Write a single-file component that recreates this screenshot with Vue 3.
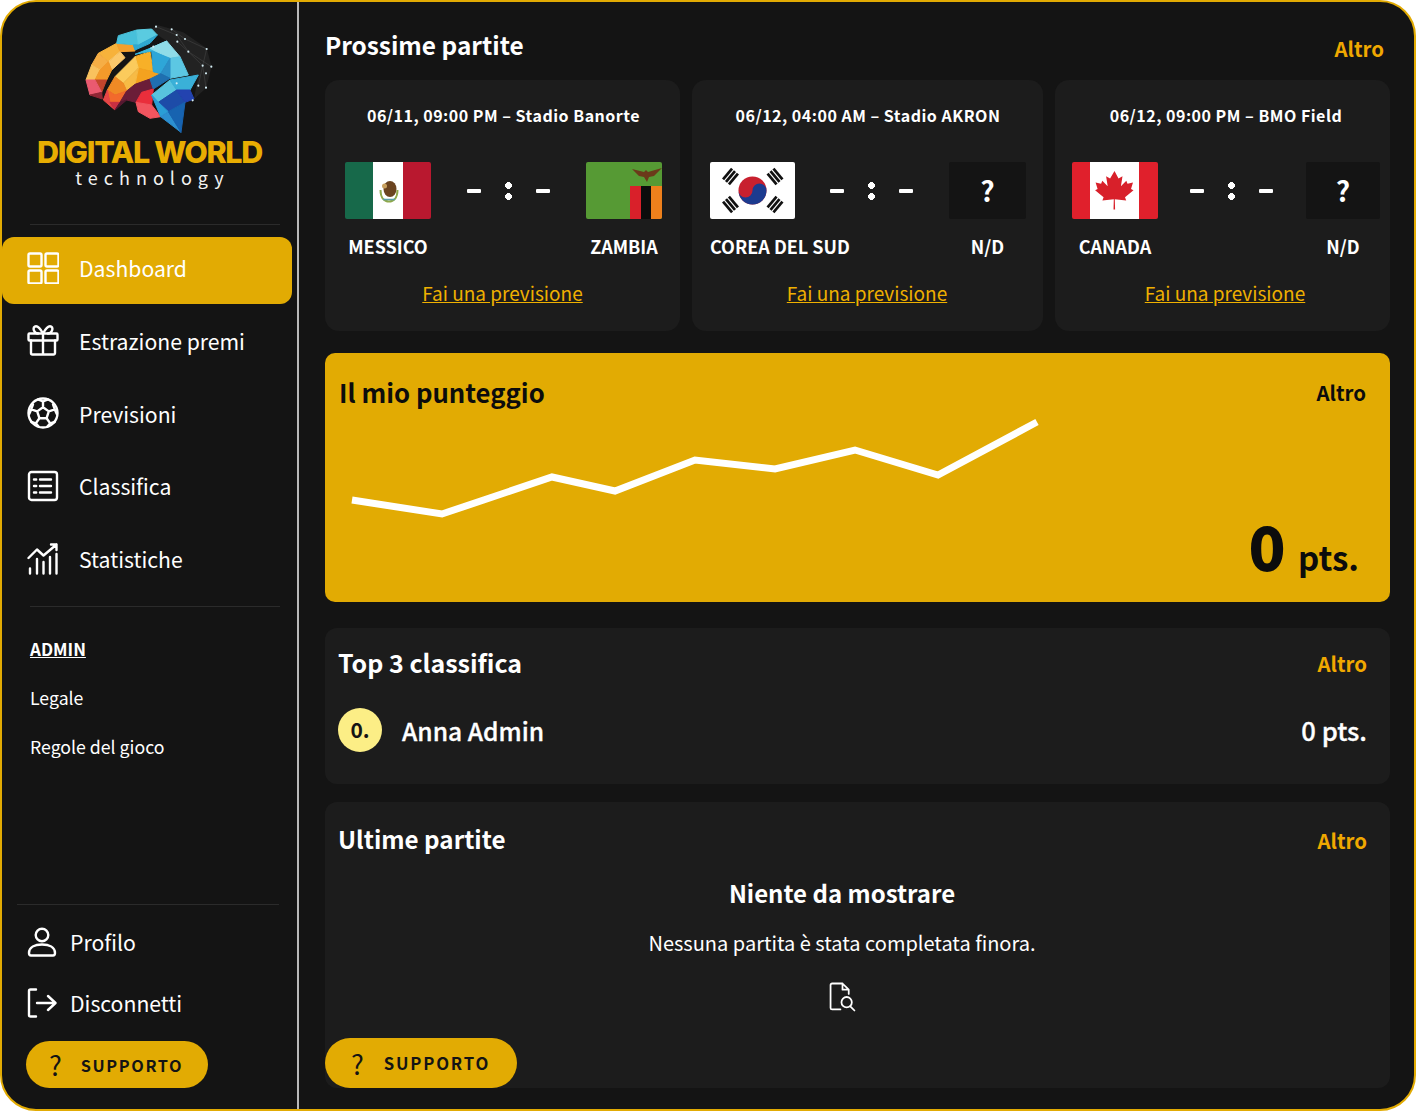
<script setup>
const navItems = [
  { label: 'Dashboard', icon: 'grid', active: true },
  { label: 'Estrazione premi', icon: 'gift' },
  { label: 'Previsioni', icon: 'ball' },
  { label: 'Classifica', icon: 'list' },
  { label: 'Statistiche', icon: 'stats' }
]

const matches = [
  { when: '06/11, 09:00 PM – Stadio Banorte', home: { name: 'MESSICO', flag: 'mx', width: 86 }, away: { name: 'ZAMBIA', flag: 'zm', width: 76 } },
  { when: '06/12, 04:00 AM – Stadio AKRON', home: { name: 'COREA DEL SUD', flag: 'kr', width: 85 }, away: { name: 'N/D', width: 77 } },
  { when: '06/12, 09:00 PM – BMO Field', home: { name: 'CANADA', flag: 'ca', width: 86 }, away: { name: 'N/D', width: 74 } }
]

// points of the score line, in the chart's own coordinates
const chartPoints = '13,85 103,99 213,62 276,76 356,45 436,54 516,35 599,60 698,7'

// low poly logo: [colour, points]
const brainFacets = [
  ['#f7b23b', '85,115 140,85 150,110 115,140'],
  ['#f5a02c', '140,85 190,90 195,108 150,110'],
  ['#fbc86b', '115,140 150,110 165,128 125,165'],
  ['#f6ae45', '85,115 115,140 90,165 65,150'],
  ['#f9c25e', '65,150 90,165 75,195 48,195'],
  ['#f39a2a', '90,165 115,140 125,165 110,195 75,195'],
  ['#c2452c', '75,195 110,195 95,232'],
  ['#ea5a70', '48,195 75,195 95,232 60,240'],
  ['#8f2735', '60,240 95,232 97,252'],
  ['#47c0da', '140,85 145,62 200,45 205,90'],
  ['#5acbe0', '200,45 245,42 262,60 205,90'],
  ['#2fa8d0', '190,90 205,90 262,60 240,85 195,105'],
  ['#f7b028', '195,125 240,110 250,170 205,160'],
  ['#fbcb5c', '135,185 195,125 205,160 160,205'],
  ['#f4a21f', '205,160 250,170 270,178 240,192 195,208'],
  ['#f7bb45', '160,205 205,160 195,208 170,228'],
  ['#ef8a25', '135,185 160,205 170,228 135,240 112,225'],
  ['#f26a2c', '112,225 135,240 170,228 150,262 120,262'],
  ['#e64646', '100,255 112,225 120,262 135,285'],
  ['#c92f42', '120,262 150,262 135,285'],
  ['#6b1d38', '150,262 170,228 195,208 240,192 250,222 215,232 198,262 170,255'],
  ['#541830', '135,285 150,262 170,255 150,272'],
  ['#3bb9dd', '195,118 240,100 290,78 300,130 245,108'],
  ['#8fdce8', '240,100 290,78 330,125 300,130'],
  ['#2ea6d8', '245,108 300,130 272,176 250,170'],
  ['#5cc7e3', '300,130 330,125 355,180 300,190'],
  ['#2b8fc7', '272,176 300,130 300,190'],
  ['#1f6fb0', '272,176 300,190 250,222 240,192'],
  ['#ea2e3b', '198,262 215,232 250,222 245,270'],
  ['#f2555f', '198,262 245,270 272,305 240,310 205,290'],
  ['#58c4de', '245,240 300,195 320,225 265,262'],
  ['#3ab0d8', '300,195 385,180 360,225 320,225'],
  ['#1d4ca8', '265,262 320,225 345,262 295,290'],
  ['#2343b0', '320,225 360,225 372,252 345,262'],
  ['#2a9ed6', '245,240 265,262 295,290 272,305'],
  ['#2c8fd0', '272,305 295,290 333,352'],
  ['#1763b0', '295,290 345,262 333,352']
]

const brainDots = [
  [258, 35], [305, 43], [320, 60], [345, 72], [322, 80], [410, 102], [355, 110],
  [398, 152], [424, 155], [408, 175], [385, 212], [408, 218], [368, 256], [320, 205], [250, 95]
]

// taegeuk bars on the Korean flag
const trigrams = [
  { x: 20.5, y: 14.5, r: -50 },
  { x: 65, y: 14.5, r: 50 },
  { x: 20.5, y: 42.5, r: 50 },
  { x: 65, y: 42.5, r: -50 }
]
</script>

<template>
  <div class="frame">
    <aside class="sidebar">
      <div class="logo">
        <svg class="brain" viewBox="0 0 480 375">
          <polygon points="240,45 262,30 340,52 410,100 425,155 408,220 372,252 385,180 355,180 330,120 290,78" fill="#222" />
          <path d="M258 35 320 60 355 110 398 152 408 218M305 43 345 72 410 102 398 152 385 212M322 80 355 110 424 155" fill="none" stroke="#4a4a4a" stroke-width="1.500" />
          <polygon v-for="(f, i) in brainFacets" :key="i" :points="f[1]" :fill="f[0]" :stroke="f[0]" stroke-width="3" stroke-linejoin="round" />
          <circle v-for="(d, i) in brainDots" :key="'d' + i" :cx="d[0]" :cy="d[1]" r="3.200" fill="#d5eef5" />
        </svg>
        <div class="brand">DIGITAL WORLD</div>
        <div class="tagline">technology</div>
      </div>

      <hr class="rule" />

      <nav class="nav">
        <a v-for="item in navItems" :key="item.label" class="nav-item" :class="{ active: item.active }">
          <svg class="icon" viewBox="0 0 32 32">
            <g v-if="item.icon === 'grid'">
              <rect x="1.500" y="1.500" width="13" height="13" rx="1.500" />
              <rect x="18.500" y="1.500" width="13" height="13" rx="1.500" />
              <rect x="1.500" y="18.500" width="13" height="13" rx="1.500" />
              <rect x="18.500" y="18.500" width="13" height="13" rx="1.500" />
            </g>
            <g v-else-if="item.icon === 'gift'">
              <rect x="1.500" y="9.500" width="29" height="7" rx="1" />
              <path d="M4 16.500V29a1.500 1.500 0 0 0 1.500 1.500h21A1.500 1.500 0 0 0 28 29V16.500M16 9.500v21" />
              <path d="M16 9.500C13 4 10 1.500 7.800 2.600 5.400 4 7 9.500 11 9.500M16 9.500C19 4 22 1.500 24.200 2.600 26.600 4 25 9.500 21 9.500" />
            </g>
            <g v-else-if="item.icon === 'ball'">
              <circle cx="16" cy="16" r="14.500" />
              <path d="M16 10.200l5.800 4.200-2.200 6.800h-7.200l-2.200-6.800zM16 10.200V4.500L11 2.400M16 4.500l5-2.100M21.800 14.400l6-2 2 4.500M27.800 12.400l-1.800-5M10.200 14.400l-6-2-2 4.500M4.200 12.400 6 7.400M19.600 21.200l3.600 5.200-3 3.300M23.200 26.400l4.400-1.400M12.400 21.200l-3.600 5.200 3 3.300M8.800 26.400 4.400 25" />
            </g>
            <g v-else-if="item.icon === 'list'">
              <rect x="2" y="2" width="28" height="28" rx="2.500" />
              <path d="M13 9.500h11M13 16h11M13 22.500h11M7 9.500h2.200M7 16h2.200M7 22.500h2.200" />
            </g>
            <g v-else>
              <path d="M1.500 15 10 6.500l6.500 6L29.500 1.500M24 1.500h5.500V7" />
              <path d="M3 30.500v-5M10 30.500V16M16.500 30.500V19M23 30.500V14M29.500 30.500V11" />
            </g>
          </svg>
          <span>{{ item.label }}</span>
        </a>
      </nav>

      <hr class="rule rule-mid" />

      <div class="admin">
        <a class="admin-title">ADMIN</a>
        <a>Legale</a>
        <a>Regole del gioco</a>
      </div>

      <div class="side-bottom">
        <hr class="rule rule-low" />
        <a class="account">
          <svg class="icon-small" viewBox="0 0 30 30">
            <circle cx="15" cy="8" r="6.300" />
            <path d="M2 26c0-6 6-8.500 13-8.500S28 20 28 26c0 1.500-.8 2.500-2 2.500H4c-1.200 0-2-1-2-2.500z" />
          </svg>
          <span>Profilo</span>
        </a>
        <a class="account">
          <svg class="icon-small" viewBox="0 0 30 30">
            <path d="M9 1.500H3.500A1.500 1.500 0 0 0 2 3v24a1.500 1.500 0 0 0 1.500 1.500H9M10 15h18M21 8l7.500 7-7.500 7" />
          </svg>
          <span>Disconnetti</span>
        </a>
        <button class="support side-support"><span class="qm">?</span>SUPPORTO</button>
      </div>
    </aside>

    <main class="main">
      <section class="upcoming">
        <div class="head">
          <h2>Prossime partite</h2>
          <a class="more">Altro</a>
        </div>
        <div class="matches">
          <article v-for="m in matches" :key="m.when" class="match">
            <p class="when">{{ m.when }}</p>
            <div class="teams">
              <div v-for="(team, side) in [m.home, null, m.away]" :key="side" :class="team ? 'team' : 'score'" :style="team ? { width: team.width + 'px' } : null">
                <template v-if="team">
                  <svg v-if="team.flag === 'mx'" class="flag" viewBox="0 0 86 57">
                    <rect width="29" height="57" fill="#17694a" />
                    <rect x="28" width="31" height="57" fill="#fff" />
                    <rect x="58" width="28" height="57" fill="#b9182f" />
                    <path d="M35.500 28c0 8 4 11.500 8.500 11.500s8.500-3.500 8.500-11.500" fill="none" stroke="#8fa84a" stroke-width="2" />
                    <ellipse cx="45" cy="27" rx="6.500" ry="8" fill="#6b4420" />
                    <circle cx="39.500" cy="24" r="2.500" fill="#c9a15f" />
                    <path d="M38 37.500h12" stroke="#5aa0a8" stroke-width="1.500" />
                  </svg>
                  <svg v-else-if="team.flag === 'zm'" class="flag" viewBox="0 0 76 57">
                    <rect width="76" height="57" fill="#569a34" />
                    <rect x="44" y="24" width="11" height="33" fill="#d9202a" />
                    <rect x="55" y="24" width="10" height="33" fill="#0c0c0c" />
                    <rect x="65" y="24" width="11" height="33" fill="#ee801c" />
                    <path d="M46 7l12 3 2-2 2 2 14-4-8 8-5 1-2 5-3-5-5-1z" fill="#6b3a1a" />
                  </svg>
                  <svg v-else-if="team.flag === 'kr'" class="flag" viewBox="0 0 85 57">
                    <rect width="85" height="57" fill="#fff" />
                    <circle cx="42.500" cy="28.500" r="14" fill="#c8202f" />
                    <path d="M28.500 28.500a7 7 0 0 0 14 0 7 7 0 0 1 14 0 14 14 0 0 1-28 0z" fill="#1c3b8f" />
                    <g v-for="t in trigrams" :key="t.x + '-' + t.y" :transform="`translate(${t.x} ${t.y}) rotate(${t.r})`" fill="#111">
                      <rect x="-7" y="-5.200" width="14" height="2.700" />
                      <rect x="-7" y="-1.350" width="14" height="2.700" />
                      <rect x="-7" y="2.500" width="14" height="2.700" />
                    </g>
                  </svg>
                  <svg v-else-if="team.flag === 'ca'" class="flag" viewBox="0 0 86 57">
                    <rect width="86" height="57" fill="#e0202c" />
                    <rect x="18" width="49" height="57" fill="#fff" />
                    <path d="M42.500 9l4 7.500 4-2.200-1.600 10 5.400-5.600 1.200 3 5.500-1.300-2 6.600 2.500 1.200-8.500 7 1.200 3.300-11.400-1.200.3 10.200h-1.600l.3-10.200-11.400 1.200 1.200-3.300-8.500-7 2.500-1.200-2-6.600 5.500 1.300 1.200-3 5.400 5.600-1.600-10 4 2.200z" fill="#d8202a" />
                  </svg>
                  <div v-else class="flag unknown">?</div>
                  <div class="team-name">{{ team.name }}</div>
                </template>
                <template v-else>
                  <i class="dash"></i><i class="colon"></i><i class="dash"></i>
                </template>
              </div>
            </div>
            <a class="predict">Fai una previsione</a>
          </article>
        </div>
      </section>

      <section class="score-card">
        <div class="head">
          <h2>Il mio punteggio</h2>
          <a class="more">Altro</a>
        </div>
        <svg class="chart" viewBox="0 0 720 110">
          <polyline :points="chartPoints" fill="none" stroke="#fff" stroke-width="7" />
        </svg>
        <div class="points"><b>0</b> pts.</div>
      </section>

      <section class="panel top-three">
        <div class="head">
          <h2>Top 3 classifica</h2>
          <a class="more">Altro</a>
        </div>
        <div class="rank-row">
          <span class="rank">0.</span>
          <span class="player">Anna Admin</span>
          <span class="player-pts">0 pts.</span>
        </div>
      </section>

      <section class="panel latest">
        <div class="head">
          <h2>Ultime partite</h2>
          <a class="more">Altro</a>
        </div>
        <div class="empty">
          <h3>Niente da mostrare</h3>
          <p>Nessuna partita è stata completata finora.</p>
          <svg class="doc" viewBox="0 0 26 28">
            <path d="M11 26H3a1.500 1.500 0 0 1-1.500-1.500v-22A1.500 1.500 0 0 1 3 1h10l6 6v4M13 1v6h6" />
            <circle cx="17" cy="19" r="5" />
            <path d="M20.500 23l4 4" />
          </svg>
        </div>
      </section>

      <button class="support main-support"><span class="qm">?</span>SUPPORTO</button>
    </main>
  </div>
</template>

<style>
html, body { background: #fff; }
</style>

<style scoped>
* { box-sizing: border-box; }

.frame {
  display: flex;
  width: 1416px;
  height: 1111px;
  background: #141414;
  border: 2px solid #e2ab03;
  border-radius: 36px;
  overflow: hidden;
  color: #fff;
  font-family: "Noto Sans CJK SC", "Noto Sans", sans-serif;
}

/* sidebar */
.sidebar {
  display: flex;
  flex-direction: column;
  flex: 0 0 297px;
  border-right: 2px solid #b9b9b9;
}

.logo {
  display: flex;
  flex-direction: column;
  align-items: center;
  height: 222px;
  padding-top: 13px;
}

.brain { width: 160px; height: 125px; margin-bottom: -4px; flex: none; }

.brand {
  font-family: "Inter", sans-serif;
  font-size: 30.500px;
  font-weight: 800;
  line-height: 31px;
  letter-spacing: -1.300px;
  color: #e8ad02;
  white-space: nowrap;
}

.tagline {
  padding-left: 6px;
  font-size: 18px;
  line-height: 20px;
  letter-spacing: 6px;
  color: #f2f2f2;
}

.rule {
  width: 250px;
  height: 1px;
  margin: 0 0 0 28px;
  border: 0;
  background: #2b2b2b;
}

.nav {
  display: flex;
  flex-direction: column;
  gap: 5.750px;
  margin-top: 12px;
}

.nav-item {
  display: flex;
  align-items: center;
  gap: 20.500px;
  height: 67px;
  margin-right: 5px;
  padding: 0 0 6px 24.500px;
  border-radius: 12px;
  font-size: 21.200px;
}

.nav-item.active { background: #e2ab03; }

.icon, .icon-small {
  flex: none;
  fill: none;
  stroke: #fff;
  stroke-width: 2.400;
  stroke-linecap: round;
  stroke-linejoin: round;
}

.icon { width: 32px; height: 32px; }
.icon-small { width: 30px; height: 30px; }

.rule-mid { margin-top: 11px; }

.admin {
  display: flex;
  flex-direction: column;
  gap: 24px;
  margin-top: 29px;
  padding-left: 28px;
  font-size: 17.700px;
  line-height: 25px;
}

.admin-title {
  font-size: 17px;
  font-weight: 700;
  text-decoration: underline;
}

.side-bottom {
  display: flex;
  flex-direction: column;
  margin-top: auto;
  padding-bottom: 21px;
}

.rule-low { margin-bottom: 6px; margin-left: 15px; width: 262px; }

.account {
  display: flex;
  align-items: center;
  gap: 13px;
  height: 61px;
  padding-left: 25px;
  font-size: 21.200px;
}

.support {
  display: flex;
  align-items: center;
  border: 0;
  border-radius: 25px;
  background: #e2ab03;
  color: #141414;
  font-family: inherit;
  font-size: 16.300px;
  font-weight: 700;
  letter-spacing: 1.600px;
}

.qm { font-size: 27px; font-weight: 400; letter-spacing: 0; line-height: 1; }

.side-support {
  gap: 19px;
  width: 182px;
  height: 47px;
  margin: 8px 0 0 24px;
  padding-left: 23px;
}

/* main column */
.main {
  position: relative;
  flex: 1;
  min-width: 0;
  display: flex;
  flex-direction: column;
  padding: 0 24px 0 26px;
}

.head {
  display: flex;
  align-items: center;
  justify-content: space-between;
}

h2 {
  margin: 0;
  font-size: 24.400px;
  font-weight: 700;
}

.more {
  font-size: 20.400px;
  font-weight: 700;
  color: #f0a800;
}

.upcoming .head { height: 78px; padding: 6px 6px 0 0; }
.upcoming .more { margin-top: 8px; }

.matches {
  display: grid;
  grid-template-columns: 355px 351px 335px;
  gap: 12px;
}

.match {
  display: flex;
  flex-direction: column;
  height: 251px;
  padding: 0 17px 0 18px;
  background: #1c1c1c;
  border-radius: 14px;
}

.match:nth-child(1) { padding: 0 18px 0 20px; }
.match:nth-child(3) { padding: 0 10px 0 17px; }

.when {
  margin: 23px 0 0;
  font-size: 16px;
  font-weight: 700;
  line-height: 24px;
  letter-spacing: .5px;
  text-align: center;
  white-space: nowrap;
}

.teams {
  display: flex;
  justify-content: space-between;
  margin-top: 35px;
}

.team { display: flex; flex-direction: column; }

.flag {
  display: block;
  width: 100%;
  height: 57px;
  border-radius: 2px;
}

.unknown {
  background: #141414;
  font-size: 28px;
  font-weight: 700;
  line-height: 57px;
  text-align: center;
}

.team-name {
  width: 0;
  min-width: 100%;
  margin-top: 15px;
  font-size: 18px;
  font-weight: 700;
  line-height: 24px;
  text-align: center;
  white-space: nowrap;
}

.score {
  display: flex;
  align-items: center;
  gap: 24px;
  height: 57px;
  margin-left: -1px;
}

.dash { width: 14px; height: 4px; background: #fff; border-radius: 1px; }

.colon {
  width: 7px;
  height: 18px;
  background: radial-gradient(circle at 3.500px 3.500px, #fff 3.200px, transparent 3.600px),
    radial-gradient(circle at 3.500px 14.500px, #fff 3.200px, transparent 3.600px);
}

.predict {
  margin: 22px 2px 0 0;
  font-size: 19px;
  line-height: 26px;
  text-align: center;
  text-decoration: underline;
  color: #efb000;
}

.score-card {
  display: flex;
  flex-direction: column;
  height: 249px;
  margin-top: 22px;
  padding: 20px 24px 0 14px;
  background: #e2ab03;
  border-radius: 10px;
  color: #0c0c0c;
}

.score-card h2 { font-size: 25.700px; }
.score-card .more { color: #0c0c0c; }

.chart {
  display: block;
  width: 720px;
  height: 110px;
  margin-top: 5px;
  flex: none;
}

.points {
  align-self: flex-end;
  margin-top: -15px;
  font-size: 33px;
  font-weight: 700;
  line-height: 70px;
  margin-right: 7px;
}

.points b { font-size: 61px; margin-right: 5px; }

.panel {
  margin-top: 26px;
  padding: 16px 23px 0 13px;
  background: #1c1c1c;
  border-radius: 12px;
}

.panel .more { margin-top: 2px; }

.top-three { height: 156px; }
.top-three h2 { font-size: 25px; }

.rank-row {
  display: flex;
  align-items: center;
  margin-top: 28px;
}

.rank {
  width: 44px;
  height: 44px;
  border-radius: 50%;
  background: #fcee86;
  color: #141414;
  font-size: 21px;
  font-weight: 700;
  line-height: 42px;
  text-align: center;
}

.player {
  margin-left: 20px;
  font-size: 24.600px;
  font-weight: 500;
  -webkit-text-stroke: .3px #fff;
}

.player-pts {
  margin: -2px 0 0 auto;
  font-size: 25.600px;
  font-weight: 500;
  -webkit-text-stroke: .3px #fff;
}

.latest { height: 286px; margin-top: 18px; padding-top: 19px; }
.latest h2 { font-size: 24.200px; }

.empty {
  display: flex;
  flex-direction: column;
  align-items: center;
  margin-right: 21px;
}

h3 {
  margin: 19px 0 0;
  font-size: 24px;
  font-weight: 700;
  line-height: 36px;
}

.empty p {
  margin: 17px 0 0;
  font-size: 20px;
  line-height: 30px;
}

.doc {
  width: 27px;
  height: 30px;
  margin-top: 24px;
  fill: none;
  stroke: #fff;
  stroke-width: 1.700;
  stroke-linecap: round;
  stroke-linejoin: round;
}

.main-support {
  position: absolute;
  left: 26px;
  top: 1036px;
  gap: 20px;
  width: 192px;
  height: 50px;
  padding-left: 26px;
  font-size: 16.700px;
  letter-spacing: 1.800px;
}
</style>
